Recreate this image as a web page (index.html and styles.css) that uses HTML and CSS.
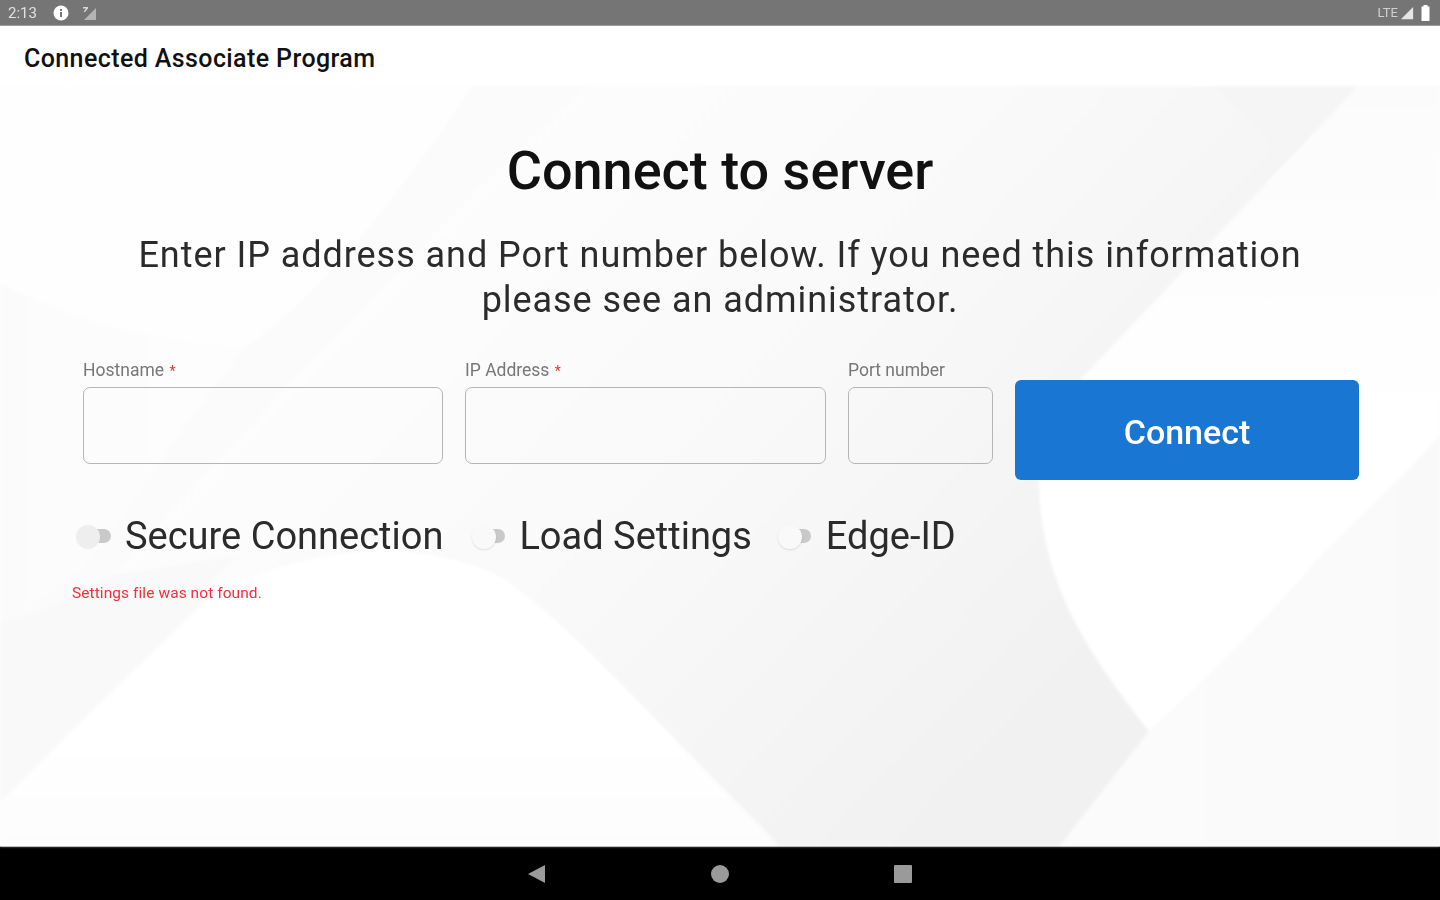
FILE: index.html
```html
<!DOCTYPE html>
<html lang="en">
<head>
<meta charset="utf-8">
<title>Connected Associate Program</title>
<link rel="stylesheet" href="styles.css">
</head>
<body>
<div class="screen">
  <header class="status-bar">
    <div class="status-group">
      <span class="status-time">2:13</span>
      <svg class="status-info" viewBox="0 0 16 16"><circle cx="8" cy="8" r="7.5" fill="#fff"/><rect x="7" y="7" width="2" height="5" fill="#757575"/><rect x="7" y="4" width="2" height="2" fill="#757575"/></svg>
      <svg class="status-sim" viewBox="0 0 16 16"><path d="M15 15V3L3 15z" fill="#b4b4b4"/><path d="M2 2h5v1.500L4 7H2.500L5 3.500H2z" fill="#d8d8d8"/></svg>
    </div>
    <div class="status-group status-right">
      <span class="status-lte">LTE</span>
      <svg class="status-signal" viewBox="0 0 16 16"><path d="M15 1v14H1z" fill="#e6e6e6"/></svg>
      <svg class="status-battery" viewBox="0 0 10 16"><path d="M3 0h4v1.500h2V16H1V1.500h2z" fill="#fff"/></svg>
    </div>
  </header>
  <div class="app-bar">Connected Associate Program</div>
  <main class="main">
    <svg class="backdrop" viewBox="0 0 1440 761" preserveAspectRatio="none" aria-hidden="true">
      <defs>
        <linearGradient id="centre" gradientUnits="userSpaceOnUse" x1="420" y1="60" x2="1020" y2="640">
          <stop offset="0" stop-color="#fdfdfd"/>
          <stop offset="0.5" stop-color="#f9f9f9"/>
          <stop offset="1" stop-color="#f1f1f1"/>
        </linearGradient>
        <linearGradient id="rightUpper" x1="0" y1="0" x2="0" y2="1">
          <stop offset="0" stop-color="#fbfbfb"/>
          <stop offset="0.5" stop-color="#ffffff"/>
          <stop offset="1" stop-color="#ffffff"/>
        </linearGradient>
        <linearGradient id="rightLower" x1="0" y1="0" x2="1" y2="0">
          <stop offset="0" stop-color="#fbfbfb"/>
          <stop offset="1" stop-color="#f9f9f9"/>
        </linearGradient>
        <linearGradient id="blob" x1="0" y1="0" x2="0" y2="1">
          <stop offset="0" stop-color="#ffffff"/>
          <stop offset="0.6" stop-color="#ffffff"/>
          <stop offset="1" stop-color="#fcfcfc"/>
        </linearGradient>
        <linearGradient id="leftBand" x1="0" y1="0" x2="1" y2="0">
          <stop offset="0" stop-color="#fbfbfb"/>
          <stop offset="1" stop-color="#fdfdfd"/>
        </linearGradient>
      </defs>
      <rect width="1440" height="761" fill="url(#centre)"/>
      <path d="M1216 0H1358L1285 72z" fill="#f5f5f5"/>
      <path d="M1358 0H1440V761H1060L1149 646C1090 570 1040 500 1039 394C1039 350 1055 320 1087 287z" fill="url(#rightUpper)"/>
      <path d="M1149 646C1200 600 1270 530 1317 474C1350 440 1400 395 1440 350V761H1060z" fill="url(#rightLower)"/>
      <path d="M0 0H588C470 100 320 270 197 394C160 440 130 470 110 490C80 515 40 530 0 537z" fill="#fbfbfb"/>
      <path d="M0 0H473C390 120 320 210 245 262C150 255 70 235 0 197z" fill="#fefefe"/>
      <path d="M0 197C70 235 150 255 245 262C200 320 150 390 110 450C80 490 40 520 0 537z" fill="url(#leftBand)"/>
      <path d="M0 537C50 525 85 505 110 490L240 470C210 490 200 510 197 524L60 657L0 717z" fill="#f9f9f9"/>
      <path d="M0 717L60 657L197 524C250 480 350 460 413 467C450 472 480 480 505 494C570 540 660 640 720 700L780 761H0z" fill="url(#blob)"/>
    </svg>
    <div class="content">
      <h1 class="title">Connect to server</h1>
      <p class="intro">Enter IP address and Port number below. If you need this information please see an administrator.</p>
      <form class="form-row">
        <label class="field field-host">
          <span class="field-label">Hostname <span class="req">*</span></span>
          <input class="field-input" type="text">
        </label>
        <label class="field field-ip">
          <span class="field-label">IP Address <span class="req">*</span></span>
          <input class="field-input" type="text">
        </label>
        <label class="field field-port">
          <span class="field-label">Port number</span>
          <input class="field-input" type="text">
        </label>
        <button class="connect" type="button">Connect</button>
      </form>
      <div class="toggles">
        <div class="toggle-item toggle-secure"><span class="switch"><span class="knob"></span></span><span>Secure Connection</span></div>
        <div class="toggle-item toggle-load"><span class="switch"><span class="knob"></span></span><span>Load Settings</span></div>
        <div class="toggle-item toggle-edge"><span class="switch"><span class="knob"></span></span><span>Edge-ID</span></div>
      </div>
      <p class="error">Settings file was not found.</p>
    </div>
  </main>
  <nav class="nav-bar">
    <svg class="nav-icon" viewBox="0 0 18 18"><path d="M17 0v18L0 9z" fill="#9a9a9a"/></svg>
    <svg class="nav-icon" viewBox="0 0 18 18"><circle cx="9" cy="9" r="9" fill="#9a9a9a"/></svg>
    <svg class="nav-icon" viewBox="0 0 18 18"><rect width="18" height="18" rx="1" fill="#9a9a9a"/></svg>
  </nav>
</div>
</body>
</html>
```
FILE: styles.css
```css
* { box-sizing: border-box; }
html, body { margin: 0; padding: 0; }
body { font-family: Roboto, "Liberation Sans", sans-serif; color: #1f1f1f; background: #fff; }
.screen { width: 1440px; height: 900px; display: flex; flex-direction: column; overflow: hidden; }

.status-bar { height: 26px; flex: none; background: #757575; border-bottom: 1px solid #9a9a9a; display: flex; justify-content: space-between; align-items: center; padding: 0 9px 0 8px; color: #e0e0e0; font-size: 15px; }
.status-group { display: flex; align-items: center; }
.status-time { width: 45px; filter: blur(0.6px); }
.status-info { width: 16px; height: 16px; filter: blur(0.4px); }
.status-sim { width: 16px; height: 16px; margin-left: 12px; filter: blur(0.6px); }
.status-right { gap: 2px; filter: blur(0.5px); }
.status-lte { font-size: 13px; color: #d0d0d0; }
.status-signal { width: 14px; height: 14px; }
.status-battery { width: 11px; height: 16px; margin-left: 4px; }

.app-bar { height: 60px; flex: none; background: #fff; display: flex; align-items: center; padding: 4px 0 0 24px; font-size: 25px; letter-spacing: 0.4px; font-weight: 500; color: #111; }

.main { position: relative; flex: 1; min-height: 0; }
.backdrop { position: absolute; inset: 0; width: 100%; height: 100%; filter: blur(1.5px); }
.content { position: relative; display: flex; flex-direction: column; align-items: center; height: 100%; filter: blur(0.4px); }

.title { margin: 54px 0 0; font-size: 54px; line-height: 62px; font-weight: 500; color: #111; white-space: nowrap; }
.intro { margin: 31px 0 0; width: 1220px; text-align: center; font-size: 36px; line-height: 45px; color: #2b2b2b; letter-spacing: 0.95px; }

.form-row { width: 1440px; padding: 0 81px 0 83px; margin-top: 33px; display: flex; gap: 22px; align-items: flex-end; height: 124px; }
.field { display: flex; flex-direction: column; gap: 7px; margin-bottom: 16px; }
.field-host { width: 360px; }
.field-ip { width: 361px; }
.field-port { width: 145px; }
.field-label { display: block; height: 19px; font-size: 17.5px; line-height: 19px; color: #777; }
.req { color: #e53935; font-size: 14px; line-height: 0; margin-left: 1px; }
.field-input { height: 77px; width: 100%; border: 1.5px solid #b5b5b5; border-radius: 7px; background: transparent; outline: none; }
.connect { flex: 1; height: 100px; border: 0; border-radius: 6px; background: #1976d2; color: #fff; padding-top: 4px; font: 500 34px Roboto, "Liberation Sans", sans-serif; }

.toggles { width: 1440px; padding-left: 76px; margin-top: 32px; display: flex; font-size: 38px; line-height: 48px; color: #2b2b2b; }
.toggle-item { display: flex; align-items: center; gap: 14px; }
.toggle-load { margin-left: 29px; }
.toggle-edge { margin-left: 26px; gap: 15px; }
.switch { position: relative; width: 35px; height: 20px; display: block; }
.toggle-load .switch, .toggle-edge .switch { width: 33px; }
.switch::before { content: ""; position: absolute; left: 8px; right: 0; top: 3px; bottom: 3px; border-radius: 7px; background: #c9c9c9; }
.knob { position: absolute; left: 0; top: 0; width: 24px; height: 24px; margin-top: -1px; border-radius: 50%; background: #eeeeee; }
.toggle-load .knob, .toggle-edge .knob { background: #f9f9f9; box-shadow: 0 1px 2px rgba(0, 0, 0, 0.12); }

.error { width: 1440px; margin: 24px 0 0; padding-left: 72px; font-size: 15.5px; letter-spacing: 0.07px; line-height: 18px; color: #f0303c; }

.nav-bar { height: 54px; flex: none; background: #000; border-top: 1px solid #999; display: flex; justify-content: center; align-items: center; gap: 165px; }
.nav-icon { width: 18px; height: 18px; }
```
